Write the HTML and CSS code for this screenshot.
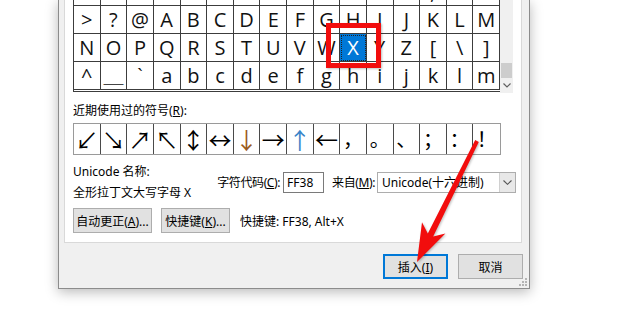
FILE: index.html
```html
<!DOCTYPE html>
<html lang="zh-CN">
<head>
    <meta charset="UTF-8">
    <meta name="viewport" content="width=device-width, initial-scale=1.0">
    <title>符号</title>
    <link rel="stylesheet" href="styles.css">
</head>
<body>
    <!-- Dialog symbol -->
    <div class="dialog">
        <div class="page">
            <!-- Tabel karakter -->
            <div class="charbox">
                <div class="chars">
                    <div class="grid">
                        <span>.</span><span>/</span><span>0</span><span>1</span><span>2</span><span>3</span><span>4</span><span>5</span>
                        <span>6</span><span>7</span><span>8</span><span>9</span><span>:</span><span>;</span><span>&lt;</span><span>=</span>

                        <span>&gt;</span><span>?</span><span>@</span><span>A</span><span>B</span><span>C</span><span>D</span><span>E</span>
                        <span>F</span><span>G</span><span>H</span><span>I</span><span>J</span><span>K</span><span>L</span><span>M</span>

                        <span>N</span><span>O</span><span>P</span><span>Q</span><span>R</span><span>S</span><span>T</span><span>U</span>
                        <span>V</span><span>W</span><span class="selected">X</span><span>Y</span><span>Z</span><span>[</span><span>\</span><span>]</span>

                        <span>^</span><span>＿</span><span>`</span><span>a</span><span>b</span><span>c</span><span>d</span><span>e</span>
                        <span>f</span><span>g</span><span>h</span><span>i</span><span>j</span><span>k</span><span>l</span><span>m</span>
                    </div>
                    <div class="mark"></div>
                </div>
                <div class="scrollbar">
                    <div class="thumb"></div>
                    <div class="down">
                        <svg width="8" height="5" viewBox="0 0 8 5"><path d="M0.5 0.5 L4 4 L7.5 0.5" fill="none" stroke="#606060" stroke-width="1.2"/></svg>
                    </div>
                </div>
            </div>

            <!-- Simbol terakhir -->
            <div class="recent-label">近期使用过的符号(<u>R</u>):</div>
            <div class="recent">
                <span class="arr">↙</span><span class="arr">↘</span><span class="arr">↗</span><span class="arr">↖</span>
                <span class="arr">↕</span><span class="arr">↔</span><span class="arr down-arrow">↓</span><span class="arr">→</span>
                <span class="arr up-arrow">↑</span><span class="arr">←</span><span>，</span><span>。</span>
                <span>、</span><span>；</span><span>：</span><span>！</span>
            </div>

            <!-- Info karakter -->
            <div class="info">
                <div class="name">
                    <div>Unicode 名称:</div>
                    <div>全形拉丁文大写字母 X</div>
                </div>
                <span class="lbl">字符代码(<u>C</u>):</span>
                <div class="field">FF38</div>
                <span class="lbl from">来自(<u>M</u>):</span>
                <div class="combo">
                    <span class="combo-text">Unicode(十六进制)</span>
                    <span class="drop">
                        <svg width="9" height="5" viewBox="0 0 9 5"><path d="M0.5 0.5 L4.5 4.3 L8.5 0.5" fill="none" stroke="#555" stroke-width="1.1"/></svg>
                    </span>
                </div>
            </div>

            <div class="actions">
                <button class="small auto">自动更正(<u>A</u>)...</button>
                <button class="small keys">快捷键(<u>K</u>)...</button>
                <span class="shortcut">快捷键: FF38, Alt+X</span>
            </div>
        </div>

        <!-- Tombol bawah -->
        <div class="footer">
            <button class="btn default">插入(<u>I</u>)</button>
            <button class="btn">取消</button>
        </div>

        <svg class="grip" width="10" height="10" viewBox="0 0 10 10">
            <rect x="7" y="1" width="2" height="2" fill="#b4b4b4"/>
            <rect x="4" y="4" width="2" height="2" fill="#b4b4b4"/>
            <rect x="7" y="4" width="2" height="2" fill="#b4b4b4"/>
            <rect x="1" y="7" width="2" height="2" fill="#b4b4b4"/>
            <rect x="4" y="7" width="2" height="2" fill="#b4b4b4"/>
            <rect x="7" y="7" width="2" height="2" fill="#b4b4b4"/>
        </svg>
    </div>

    <!-- Panah merah anotasi -->
    <svg class="arrow" width="620" height="309" viewBox="0 0 620 309">
        <polygon points="478.8,141.9 433.2,236.6 445.4,233.6 417,262 422,222.2 427.8,233.4 475.2,140.1" fill="#f20d0d"/>
    </svg>
</body>
</html>
```

FILE: styles.css
```css
/* Reset */
* {
    margin: 0;
    padding: 0;
    box-sizing: border-box;
}

html, body {
    height: 100%;
}

body {
    position: relative;
    overflow: hidden;
    background: #fff;
    font-family: "Noto Sans", "Noto Sans CJK SC", sans-serif;
    font-size: 12px;
    color: #000;
}

/* Jendela dialog */
.dialog {
    position: relative;
    display: flex;
    flex-direction: column;
    margin-left: 58px;
    width: 472px;
    height: 289px;
    background: #f0f0f0;
    border: 1px solid #8c8c8c;
    border-top: none;
    box-shadow: 0 3px 12px rgba(0, 0, 0, 0.28);
}

.page {
    margin-left: 5px;
    width: 458px;
    background: #fff;
    border: 1px solid #d9d9d9;
    border-top: none;
    padding: 0 5px 9px 8px;
}

/* Tabel karakter */
.charbox {
    display: flex;
    width: 440px;
    height: 93px;
}

.chars {
    position: relative;
    width: 427px;
    height: 92px;
    overflow: hidden;
    border-left: 1px solid #3c3c3c;
    border-bottom: 1px solid #3c3c3c;
}

.grid {
    display: grid;
    grid-template-columns: repeat(16, 1fr);
    grid-auto-rows: 28px;
    margin-top: -22px;
}

.grid span {
    display: flex;
    align-items: center;
    justify-content: center;
    border-right: 1px solid #3c3c3c;
    border-bottom: 1px solid #3c3c3c;
    font-family: "Open Sans", "Noto Sans CJK SC", sans-serif;
    font-size: 20px;
    line-height: 1;
    color: #111;
}

.grid .selected {
    background: #0078d7;
    color: #fff;
    outline: 1px dotted #222;
    outline-offset: -2px;
}

/* Kotak merah */
.mark {
    position: absolute;
    left: 252px;
    top: 23px;
    width: 55px;
    height: 45px;
    border: 5px solid #f20d0d;
    box-shadow: 1px 1px 2px rgba(0, 0, 0, 0.25);
}

.scrollbar {
    display: flex;
    flex-direction: column;
    justify-content: flex-end;
    width: 13px;
    height: 93px;
    background: #f0f0f0;
}

.thumb {
    height: 15px;
    margin: 0 1px;
    background: #cdcdcd;
}

.down {
    display: flex;
    align-items: center;
    justify-content: center;
    height: 15px;
}

/* Simbol terakhir */
.recent-label {
    margin-top: 10px;
    line-height: 16px;
}

.recent {
    display: grid;
    grid-template-columns: repeat(16, 1fr);
    margin-top: 4px;
    width: 428px;
    height: 32px;
    border: 1px solid #9a9a9a;
}

.recent span {
    display: flex;
    align-items: center;
    justify-content: center;
    border-right: 1px solid #4a4a4a;
    font-family: "Noto Sans CJK SC", sans-serif;
    font-size: 20px;
    line-height: 1;
}

.recent .arr {
    font-size: 23px;
}

.recent span:last-child {
    border-right: none;
}

.recent .down-arrow {
    color: #9a5a1e;
}

.recent .up-arrow {
    color: #3a84c8;
}

/* Info karakter */
.info {
    display: flex;
    align-items: center;
    margin-top: 6px;
    height: 42px;
    white-space: nowrap;
}

.name {
    flex: 1;
    min-width: 0;
    line-height: 21px;
}

.lbl {
    flex-shrink: 0;
    margin-right: 3px;
    letter-spacing: -0.4px;
}

.lbl.from {
    margin-left: 8px;
    margin-right: 2px;
}

.field {
    flex-shrink: 0;
    width: 41px;
    height: 21px;
    padding-left: 3px;
    line-height: 19px;
    background: #fff;
    border: 1px solid #7a7a7a;
}

.combo {
    flex-shrink: 0;
    display: flex;
    width: 139px;
    height: 21px;
    background: #fff;
    border: 1px solid #adadad;
}

.combo-text {
    padding-left: 4px;
    line-height: 19px;
}

.drop {
    display: flex;
    align-items: center;
    justify-content: center;
    margin-left: auto;
    width: 16px;
    background: #e8e8e8;
    border-left: 1px solid #d0d0d0;
}

/* Tombol */
.actions {
    display: flex;
    align-items: center;
    margin-top: 5px;
    white-space: nowrap;
}

button {
    height: 25px;
    background: #e1e1e1;
    border: 1px solid #adadad;
    font-family: "Noto Sans", "Noto Sans CJK SC", sans-serif;
    font-size: 12px;
    color: #000;
    white-space: nowrap;
}

.small.auto {
    width: 79px;
}

.small.keys {
    width: 69px;
    margin-left: 9px;
}

.shortcut {
    margin-left: 10px;
}

.footer {
    display: flex;
    justify-content: flex-end;
    gap: 10px;
    padding: 11px 6px 0 0;
}

.btn {
    width: 65px;
}

.btn.default {
    border: 2px solid #0078d7;
}

.grip {
    position: absolute;
    right: 1px;
    bottom: 1px;
}

/* Panah anotasi */
.arrow {
    position: absolute;
    left: 0;
    top: 0;
    pointer-events: none;
    filter: drop-shadow(1px 1px 1px rgba(0, 0, 0, 0.25));
}
```
